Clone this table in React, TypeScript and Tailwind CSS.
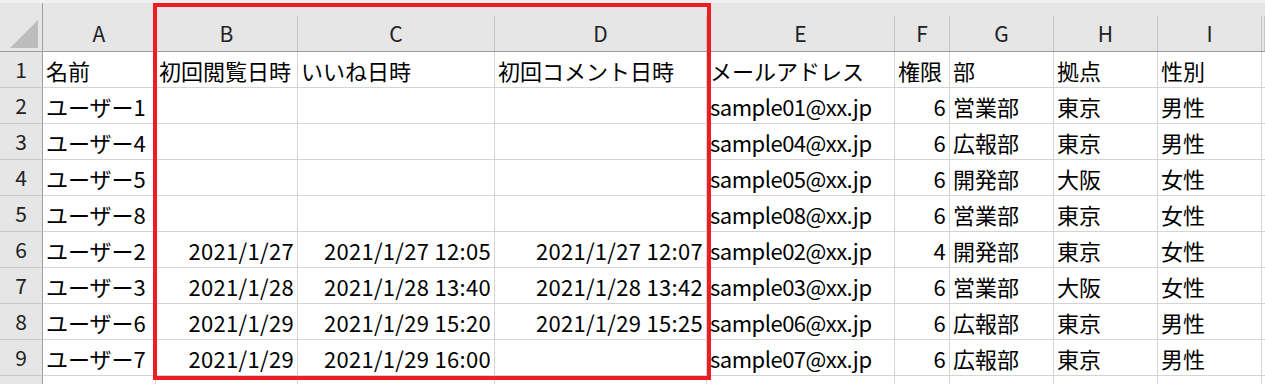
import React from "react";

const COLS = ["A", "B", "C", "D", "E", "F", "G", "H", "I", ""];

type Cell = { v: string; r?: boolean };

const rows: Cell[][] = [
  [{ v: "名前" }, { v: "初回閲覧日時" }, { v: "いいね日時" }, { v: "初回コメント日時" }, { v: "メールアドレス" }, { v: "権限" }, { v: "部" }, { v: "拠点" }, { v: "性別" }, { v: "" }],
  [{ v: "ユーザー1" }, { v: "" }, { v: "" }, { v: "" }, { v: "sample01@xx.jp" }, { v: "6", r: true }, { v: "営業部" }, { v: "東京" }, { v: "男性" }, { v: "" }],
  [{ v: "ユーザー4" }, { v: "" }, { v: "" }, { v: "" }, { v: "sample04@xx.jp" }, { v: "6", r: true }, { v: "広報部" }, { v: "東京" }, { v: "男性" }, { v: "" }],
  [{ v: "ユーザー5" }, { v: "" }, { v: "" }, { v: "" }, { v: "sample05@xx.jp" }, { v: "6", r: true }, { v: "開発部" }, { v: "大阪" }, { v: "女性" }, { v: "" }],
  [{ v: "ユーザー8" }, { v: "" }, { v: "" }, { v: "" }, { v: "sample08@xx.jp" }, { v: "6", r: true }, { v: "営業部" }, { v: "東京" }, { v: "女性" }, { v: "" }],
  [{ v: "ユーザー2" }, { v: "2021/1/27", r: true }, { v: "2021/1/27 12:05", r: true }, { v: "2021/1/27 12:07", r: true }, { v: "sample02@xx.jp" }, { v: "4", r: true }, { v: "開発部" }, { v: "東京" }, { v: "女性" }, { v: "" }],
  [{ v: "ユーザー3" }, { v: "2021/1/28", r: true }, { v: "2021/1/28 13:40", r: true }, { v: "2021/1/28 13:42", r: true }, { v: "sample03@xx.jp" }, { v: "6", r: true }, { v: "営業部" }, { v: "大阪" }, { v: "女性" }, { v: "" }],
  [{ v: "ユーザー6" }, { v: "2021/1/29", r: true }, { v: "2021/1/29 15:20", r: true }, { v: "2021/1/29 15:25", r: true }, { v: "sample06@xx.jp" }, { v: "6", r: true }, { v: "広報部" }, { v: "東京" }, { v: "男性" }, { v: "" }],
  [{ v: "ユーザー7" }, { v: "2021/1/29", r: true }, { v: "2021/1/29 16:00", r: true }, { v: "" }, { v: "sample07@xx.jp" }, { v: "6", r: true }, { v: "広報部" }, { v: "東京" }, { v: "男性" }, { v: "" }],
  [{ v: "" }, { v: "" }, { v: "" }, { v: "" }, { v: "" }, { v: "" }, { v: "" }, { v: "" }, { v: "" }, { v: "" }],
];

const gridCols =
  "grid grid-cols-[43px_113px_142px_197px_212px_188px_55px_104px_104px_104px_1fr]";

export default function App() {
  return (
    <div
      className="relative w-[1265px] h-[384px] overflow-hidden bg-white text-black"
      style={{ fontFamily: '"Noto Sans CJK JP", "Noto Sans", sans-serif' }}
    >
      <div className="h-[3px] bg-[#f0f0f0]" />
      {/* column header row */}
      <div className={gridCols}>
        <div className="h-[49px] bg-[#e6e6e6] border-b border-b-[#9e9e9e] border-r border-r-[#9e9e9e] flex items-end justify-end pr-[3px] pb-[3px]">
          <svg width="29" height="28" viewBox="0 0 29 28">
            <polygon points="28,0 28,28 0,28" fill="#bcbcbc" />
          </svg>
        </div>
        {COLS.map((c, i) => (
          <div
            key={i}
            className="h-[49px] bg-[#e6e6e6] border-b border-b-[#9e9e9e] flex"
          >
            <div className="flex-1 flex items-center justify-center pt-[13px] text-[21px] leading-none text-[#222]">
              {c}
            </div>
            <div className="w-px h-[35px] self-end bg-[#c6c6c6]" />
          </div>
        ))}
      </div>
      {rows.map((row, ri) => (
        <div key={ri} className={gridCols}>
          <div className="h-[36px] bg-[#e6e6e6] border-r border-r-[#9e9e9e] border-b border-b-[#c6c6c6] flex items-center justify-center text-[21px] leading-none text-[#222]">
            {ri < 9 ? ri + 1 : ""}
          </div>
          {row.map((cell, ci) => (
            <div
              key={ci}
              className={`h-[36px] border-r border-b border-[#d4d4d4] px-[3px] flex items-center whitespace-nowrap text-[22px] leading-none ${
                cell.r
                  ? "justify-end tracking-[0.3px]"
                  : ci === 4 && ri > 0
                  ? "justify-start tracking-[-0.5px]"
                  : "justify-start"
              }`}
            >
              {cell.v}
            </div>
          ))}
        </div>
      ))}
      <div className="absolute left-[153px] top-[3px] w-[558px] h-[377px] border-4 border-[#ee1c25]" />
    </div>
  );
}
